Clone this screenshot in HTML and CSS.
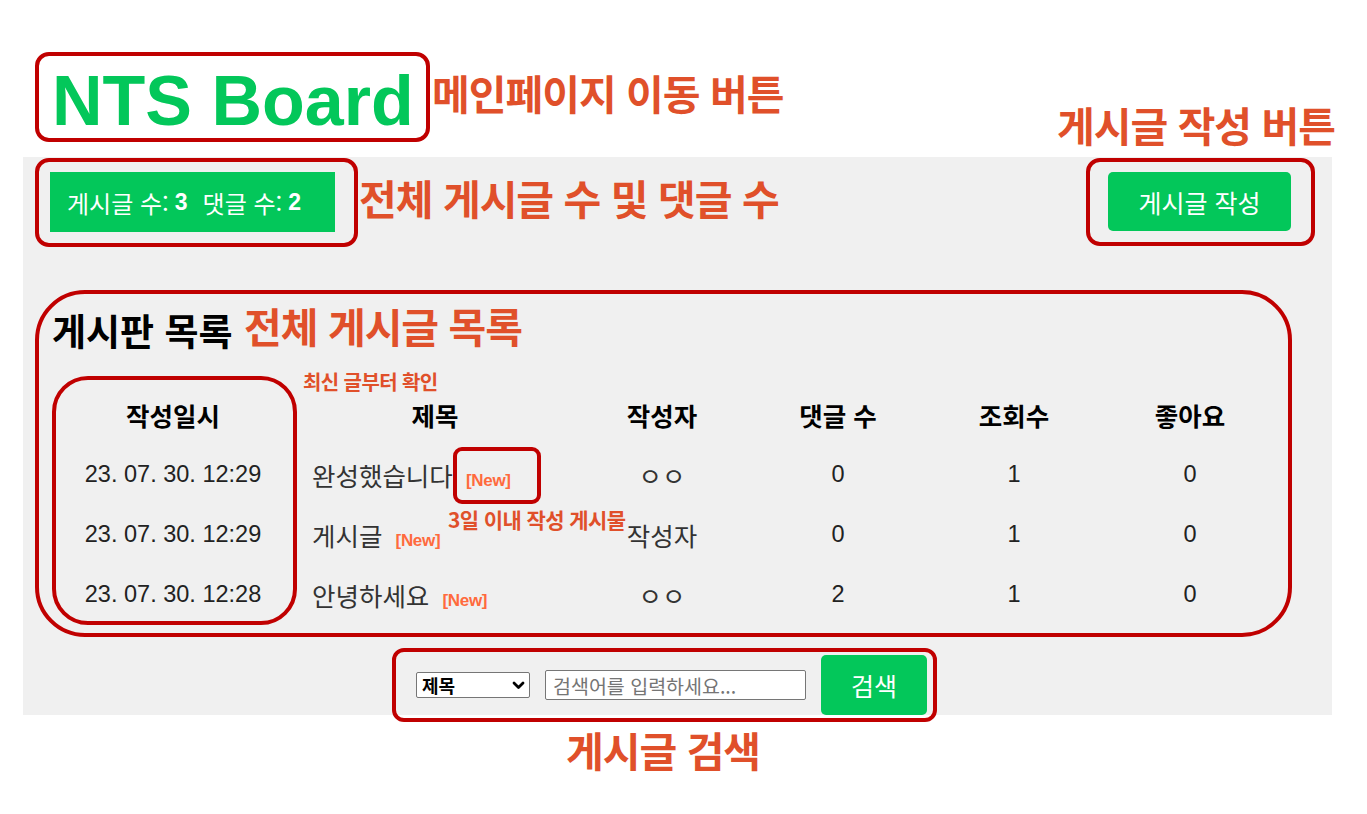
FILE: index.html
```html
<!DOCTYPE html>
<html lang="ko">
<head>
<meta charset="utf-8">
<title>NTS Board</title>
<link rel="stylesheet" href="styles.css">
</head>
<body>
<div class="page">
  <header class="site-header">
    <h1 class="logo"><a href="#">NTS Board</a></h1>
  </header>

  <main class="panel">
    <div class="top-row">
      <div class="stats">게시글 수:<b>3</b><span class="gap"></span>댓글 수:<b>2</b></div>
      <button class="write-btn" type="button">게시글 작성</button>
    </div>

    <h2 class="list-title">게시판 목록</h2>

    <table class="board">
      <colgroup>
        <col class="c-date"><col class="c-title"><col class="c-num"><col class="c-num"><col class="c-num"><col class="c-num">
      </colgroup>
      <thead>
        <tr><th>작성일시</th><th>제목</th><th>작성자</th><th>댓글 수</th><th>조회수</th><th>좋아요</th></tr>
      </thead>
      <tbody>
        <tr><td class="num">23. 07. 30. 12:29</td><td class="title">완성했습니다 <span class="new">[New]</span></td><td>ㅇㅇ</td><td class="num">0</td><td class="num">1</td><td class="num">0</td></tr>
        <tr><td class="num">23. 07. 30. 12:29</td><td class="title">게시글 <span class="new">[New]</span></td><td>작성자</td><td class="num">0</td><td class="num">1</td><td class="num">0</td></tr>
        <tr><td class="num">23. 07. 30. 12:28</td><td class="title">안녕하세요 <span class="new">[New]</span></td><td>ㅇㅇ</td><td class="num">2</td><td class="num">1</td><td class="num">0</td></tr>
      </tbody>
    </table>

    <form class="search">
      <div class="select-wrap">
        <select class="search-select"><option>제목</option><option>작성자</option></select>
        <svg class="chev" width="13" height="9" viewBox="0 0 13 9"><path d="M2 2 L6.5 6.5 L11 2" fill="none" stroke="#000" stroke-width="2.8" stroke-linecap="round" stroke-linejoin="round"/></svg>
      </div>
      <input class="search-input" type="text" placeholder="검색어를 입력하세요...">
      <button class="search-btn" type="button">검색</button>
    </form>
  </main>

  <div class="annotations">
    <div class="box box-logo"></div>
    <div class="box box-stats"></div>
    <div class="box box-write"></div>
    <div class="box box-list"></div>
    <div class="box box-date"></div>
    <div class="box box-new"></div>
    <div class="box box-search"></div>

    <div class="note note-big note-main">메인페이지 이동 버튼</div>
    <div class="note note-big note-write">게시글 작성 버튼</div>
    <div class="note note-big note-stats">전체 게시글 수 및 댓글 수</div>
    <div class="note note-big note-list">전체 게시글 목록</div>
    <div class="note note-big note-search">게시글 검색</div>
    <div class="note note-small note-latest">최신 글부터 확인</div>
    <div class="note note-small note-recent">3일 이내 작성 게시물</div>
  </div>
</div>
</body>
</html>
```

FILE: styles.css
```css
* { box-sizing: border-box; }

body {
  margin: 0;
  background: #fff;
  color: #000;
  font-family: "Noto Sans CJK KR", "Liberation Sans", sans-serif;
}

.page {
  position: relative;
  width: 1367px;
  min-height: 814px;
  padding: 0 0 0 23px;
}

/* header */
.site-header {
  padding: 61px 0 0 29px;
  height: 157px;
}
.logo {
  margin: 0;
  font: bold 70px/80px "Liberation Sans", Arial, sans-serif;
}
.logo a {
  color: #03c75a;
  text-decoration: none;
}

/* gray panel */
.panel {
  width: 1309px;
  background: #f0f0f0;
  padding: 15px 41px 0 27px;
}

.top-row {
  display: flex;
  justify-content: space-between;
  align-items: flex-start;
}
.stats {
  width: 285px;
  height: 60px;
  background: #03c75a;
  color: #fff;
  font-size: 24px;
  display: flex;
  align-items: center;
  padding-left: 17px;
  white-space: nowrap;
}
.stats b {
  font: bold 23px "Liberation Sans", Arial, sans-serif;
  margin-left: 6px;
}
.stats .gap { display: inline-block; width: 15px; }

.write-btn {
  width: 183px;
  height: 59px;
  background: #03c75a;
  color: #fff;
  border: none;
  border-radius: 5px;
  font: 25px "Noto Sans CJK KR", sans-serif;
  cursor: pointer;
}

.list-title {
  margin: 78px 0 0 2px;
  font-size: 37px;
  line-height: 40px;
  font-weight: bold;
}

/* table */
.board {
  margin-top: 34px;
  width: 1227px;
  border-collapse: collapse;
  table-layout: fixed;
}
.c-date { width: 246px; }
.c-title { width: 278px; }
.c-num { width: 176px; }

.board th {
  height: 60px;
  font-size: 25.5px;
  font-weight: bold;
  text-align: center;
  padding: 0;
}
.board td {
  height: 60px;
  padding: 0;
  font-size: 25.5px;
  text-align: center;
  color: #333;
  white-space: nowrap;
}
.board td.num {
  font-family: "Liberation Sans", Arial, sans-serif;
  font-size: 23.5px;
  color: #222;
}
.board td.title {
  text-align: left;
  padding-left: 16px;
}
.new {
  font: bold 17px "Liberation Sans", Arial, sans-serif;
  color: #ff6a3d;
  margin-left: 6px;
  letter-spacing: -0.3px;
}

/* search */
.search {
  margin-top: 31px;
  height: 60px;
  display: flex;
  justify-content: center;
  align-items: center;
  gap: 15px;
  padding-left: 2px;
}
.select-wrap {
  position: relative;
  width: 114px;
  height: 26px;
}
.search-select {
  appearance: none;
  -webkit-appearance: none;
  width: 100%;
  height: 100%;
  border: 1px solid #767676;
  border-radius: 2px;
  background: #fff;
  font: bold 18px "Noto Sans CJK KR", sans-serif;
  color: #000;
  padding: 0 0 0 5px;
  line-height: 24px;
}
.chev {
  position: absolute;
  right: 5px;
  top: 9px;
  pointer-events: none;
}
.search-input {
  width: 261px;
  height: 30px;
  border: 1px solid #767676;
  border-radius: 2px;
  background: #fff;
  padding: 0 7px;
  font: 19.5px "Noto Sans CJK KR", sans-serif;
}
.search-input::placeholder { color: #757575; }
.search-btn {
  width: 106px;
  height: 60px;
  border: none;
  border-radius: 5px;
  background: #03c75a;
  color: #fff;
  font: 25px "Noto Sans CJK KR", sans-serif;
}

/* annotation overlay */
.annotations {
  position: absolute;
  inset: 0;
  pointer-events: none;
}
.box {
  position: absolute;
  border: 4px solid #c00000;
}
.box-logo   { left: 35px;   top: 52px;  width: 395px;  height: 90px;  border-radius: 14px; }
.box-stats  { left: 35px;   top: 158px; width: 323px;  height: 89px;  border-radius: 14px; }
.box-write  { left: 1086px; top: 158px; width: 229px;  height: 88px;  border-radius: 14px; }
.box-list   { left: 35px;   top: 290px; width: 1257px; height: 347px; border-radius: 50px; }
.box-date   { left: 52px;   top: 376px; width: 245px;  height: 249px; border-radius: 36px; }
.box-new    { left: 453px;  top: 447px; width: 88px;   height: 57px;  border-radius: 9px; }
.box-search { left: 392px;  top: 648px; width: 545px;  height: 74px;  border-radius: 12px; }

.note {
  position: absolute;
  color: #e0502a;
  font-weight: bold;
  line-height: 1;
  white-space: nowrap;
  font-family: "Noto Sans CJK KR", sans-serif;
}
.note-big { font-size: 41px; letter-spacing: -1px; }
.note-small { font-size: 20px; letter-spacing: -0.6px; }

.note-main   { left: 432px;  top: 72px; }
.note-write  { left: 1057px; top: 104px; }
.note-stats  { left: 359px;  top: 177px; }
.note-list   { left: 244px;  top: 305px; }
.note-search { left: 566px;  top: 729px; }
.note-latest { left: 303px;  top: 372px; }
.note-recent { left: 448px;  top: 509px; font-size: 21px; }
```
